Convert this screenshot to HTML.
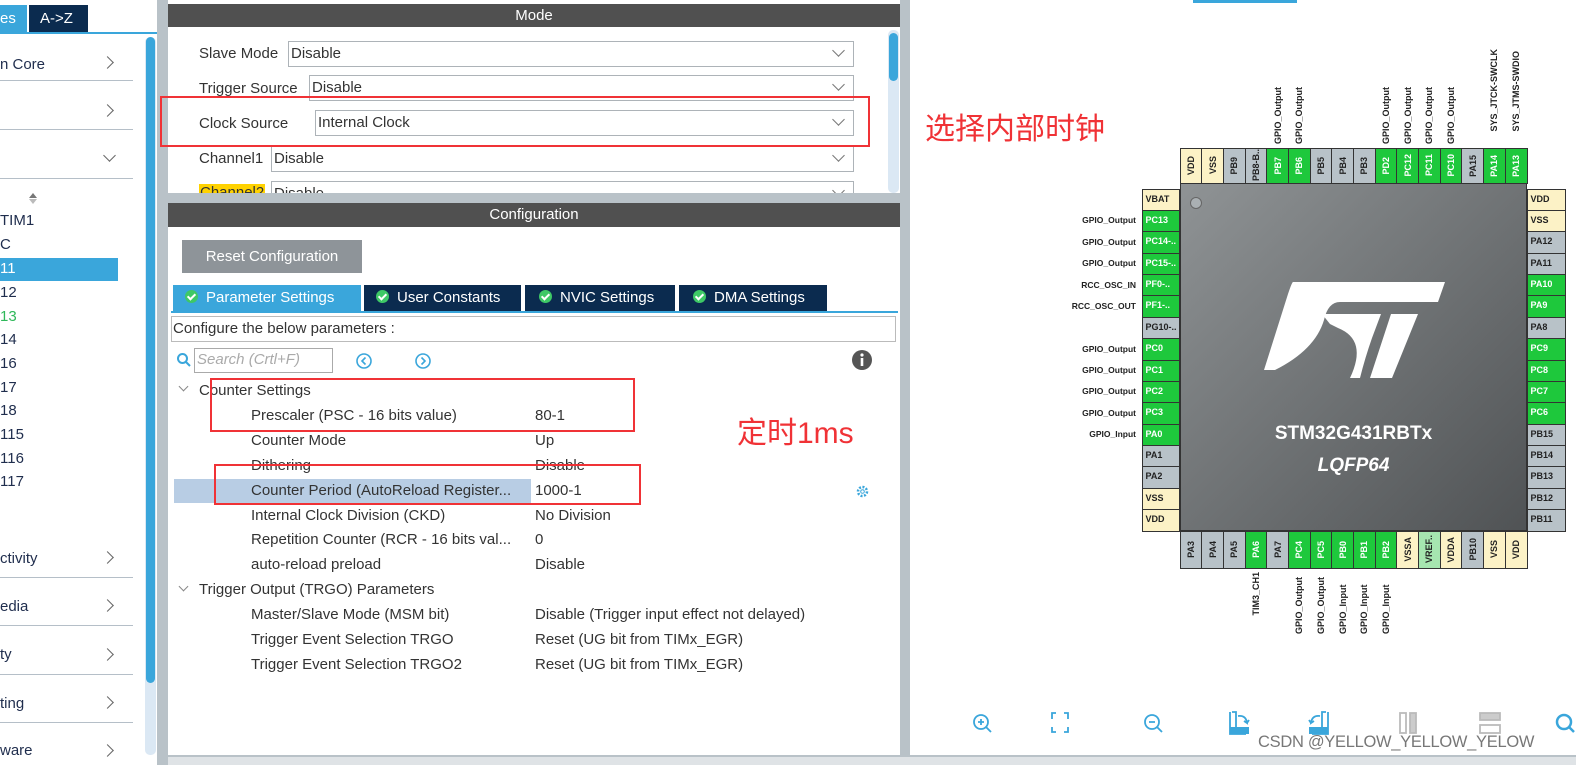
<!DOCTYPE html>
<html><head><meta charset="utf-8">
<style>
*{margin:0;padding:0;box-sizing:border-box}
body{width:1576px;height:765px;overflow:hidden;background:#fff;font-family:"Liberation Sans","Noto Sans CJK SC",sans-serif;position:relative;color:#333}
.a{position:absolute}
.t{position:absolute;font-size:15px;white-space:nowrap;color:#333}
.sb{font-size:15px;color:#1f2d4d;position:absolute;white-space:nowrap}
.chev{position:absolute;width:9px;height:9px;border-right:1.5px solid #666;border-top:1.5px solid #666;transform:rotate(45deg)}
.chd{position:absolute;width:9px;height:9px;border-right:1.5px solid #666;border-bottom:1.5px solid #666;transform:rotate(45deg)}
.line{position:absolute;left:0;width:133px;height:1px;background:#b5bfc8}
.sel{position:absolute;border:1px solid #adb3b8;background:#fff;height:26px}
.sel span{position:absolute;left:2px;top:3px;font-size:15px;color:#333}
.sel i{position:absolute;right:10px;top:4px;width:9px;height:9px;border-right:1.5px solid #777;border-bottom:1.5px solid #777;transform:rotate(45deg)}
.tab{position:absolute;top:285px;height:26px;background:#0b2b4f;color:#fff;font-size:15px;line-height:26px;padding-left:12px}
.tab b{display:inline-block;width:13px;height:13px;border-radius:50%;background:#3ec866;margin-right:8px;vertical-align:-1px;position:relative}
.tab b:after{content:"";position:absolute;left:4px;top:2px;width:3px;height:6px;border-right:2px solid #fff;border-bottom:2px solid #fff;transform:rotate(45deg)}
.red{position:absolute;border:2px solid #f03236}
.row{flex:1;border:1px solid #333;margin:-0.5px;font-size:9px;font-weight:bold;color:#222;overflow:hidden;white-space:nowrap}
.g{background:#1ec83c;color:#fff}.y{background:#fcf2c6}.s{background:#b8c2c8}.lg{background:#a6e6b0}
.col{position:absolute;display:flex;flex-direction:column}
.rw{position:absolute;display:flex;flex-direction:row}
.col .row{padding:4px 0 0 3px}
.rw .row{display:flex;align-items:center;justify-content:center}
.rw .row span,.vl span{writing-mode:vertical-rl;transform:rotate(180deg)}
.vl{flex:1;display:flex;justify-content:center;font-size:9px;font-weight:bold;color:#222;white-space:nowrap}
.ll{flex:1;text-align:right;font-size:8.5px;font-weight:bold;color:#222;padding-top:5px;white-space:nowrap}
</style></head><body>

<!-- left sidebar -->
<div class="a" style="left:0;top:5px;width:27px;height:27px;background:#3aa6db;color:#fff;font-size:15px;line-height:27px">es</div>
<div class="a" style="left:29px;top:5px;width:59px;height:27px;background:#0b2b4f;color:#fff;font-size:15px;line-height:27px;padding-left:11px">A-&gt;Z</div>
<div class="a" style="left:0;top:32px;width:157px;height:2px;background:#3aa6db"></div>
<div class="a" style="left:145px;top:37px;width:11px;height:718px;background:#dbe8f4;border-radius:5px"></div>
<div class="a" style="left:146px;top:37px;width:9px;height:646px;background:#3aa6db;border-radius:5px"></div>
<div class="a" style="left:157px;top:0;width:11px;height:765px;background:#b9c2c8"></div>
<div class="sb" style="left:0;top:56px">n Core</div><div class="chev" style="left:103px;top:58px"></div><div class="line" style="top:80px"></div>
<div class="chev" style="left:103px;top:106px"></div><div class="line" style="top:129px"></div>
<div class="chd" style="left:105px;top:151px"></div><div class="line" style="top:178px"></div>
<div class="a" style="left:29px;top:193px;border:4px solid transparent;border-bottom:5px solid #777;border-top:0"></div>
<div class="a" style="left:29px;top:199px;border:4px solid transparent;border-top:5px solid #bbb;border-bottom:0"></div>
<div class="sb" style="left:0;top:212px">TIM1</div>
<div class="sb" style="left:0;top:236px">C</div>
<div class="a" style="left:0;top:258px;width:118px;height:23px;background:#3aa6db"></div>
<div class="sb" style="left:0;top:260px;color:#fff">11</div>
<div class="sb" style="left:0;top:284px">12</div>
<div class="sb" style="left:0;top:308px;color:#2fb85a">13</div>
<div class="sb" style="left:0;top:331px">14</div>
<div class="sb" style="left:0;top:355px">16</div>
<div class="sb" style="left:0;top:379px">17</div>
<div class="sb" style="left:0;top:402px">18</div>
<div class="sb" style="left:0;top:426px">115</div>
<div class="sb" style="left:0;top:450px">116</div>
<div class="sb" style="left:0;top:473px">117</div>
<div class="sb" style="left:0;top:550px">ctivity</div><div class="chev" style="left:103px;top:553px"></div><div class="line" style="top:577px"></div>
<div class="sb" style="left:0;top:598px">edia</div><div class="chev" style="left:103px;top:601px"></div><div class="line" style="top:625px"></div>
<div class="sb" style="left:0;top:646px">ty</div><div class="chev" style="left:103px;top:650px"></div><div class="line" style="top:674px"></div>
<div class="sb" style="left:0;top:695px">ting</div><div class="chev" style="left:103px;top:698px"></div><div class="line" style="top:722px"></div>
<div class="sb" style="left:0;top:742px">ware</div><div class="chev" style="left:103px;top:746px"></div>

<!-- middle panel -->
<div class="a" style="left:168px;top:4px;width:732px;height:23px;background:#505050;color:#fff;font-size:15px;text-align:center;line-height:23px">Mode</div>
<div class="t" style="left:199px;top:45px">Slave Mode</div>
<div class="sel" style="left:288px;top:41px;width:566px"><span>Disable</span><i></i></div>
<div class="t" style="left:199px;top:80px">Trigger Source</div>
<div class="sel" style="left:309px;top:75px;width:545px"><span>Disable</span><i></i></div>
<div class="t" style="left:199px;top:115px">Clock Source</div>
<div class="sel" style="left:315px;top:110px;width:539px"><span>Internal Clock</span><i></i></div>
<div class="t" style="left:199px;top:150px">Channel1</div>
<div class="sel" style="left:271px;top:146px;width:583px"><span>Disable</span><i></i></div>
<div class="a" style="left:168px;top:180px;width:720px;height:13px;overflow:hidden">
 <div class="t" style="left:31px;top:4px;background:#ffd200;padding:0 1px">Channel2</div>
 <div class="sel" style="left:103px;top:1px;width:583px"><span>Disable</span><i></i></div>
</div>
<div class="red" style="left:160px;top:96px;width:710px;height:51px"></div>
<div class="a" style="left:888px;top:30px;width:11px;height:163px;background:#dbe8f4;border-radius:5px"></div>
<div class="a" style="left:889px;top:33px;width:9px;height:48px;background:#3aa6db;border-radius:5px"></div>
<div class="a" style="left:168px;top:193px;width:732px;height:10px;background:#b9c2c8"></div>
<div class="a" style="left:168px;top:203px;width:732px;height:24px;background:#505050;color:#fff;font-size:15px;text-align:center;line-height:24px">Configuration</div>
<div class="a" style="left:182px;top:240px;width:180px;height:33px;background:#8e9499;color:#fff;font-size:15px;text-align:center;line-height:33px">Reset Configuration</div>
<div class="tab" style="left:173px;width:188px;background:#3aa6db"><b></b>Parameter Settings</div>
<div class="tab" style="left:364px;width:157px"><b></b>User Constants</div>
<div class="tab" style="left:525px;width:150px;padding-left:14px"><b></b>NVIC Settings</div>
<div class="tab" style="left:679px;width:148px;padding-left:14px"><b></b>DMA Settings</div>
<div class="a" style="left:171px;top:311px;width:727px;height:2px;background:#3aa6db"></div>
<div class="a" style="left:171px;top:316px;width:725px;height:26px;border:1px solid #bbb;font-size:15px;padding:3px 0 0 1px">Configure the below parameters :</div>
<svg class="a" style="left:176px;top:352px" width="16" height="16"><circle cx="6.5" cy="6.5" r="4.5" fill="none" stroke="#3aa6db" stroke-width="2"/><path d="M10 10l4 4" stroke="#3aa6db" stroke-width="2"/></svg>
<div class="a" style="left:194px;top:348px;width:139px;height:25px;border:1px solid #aaa;font-size:15px;font-style:italic;color:#aaa;padding:2px 0 0 2px">Search (Crtl+F)</div>
<svg class="a" style="left:355px;top:352px" width="18" height="18"><circle cx="9" cy="9" r="7" fill="none" stroke="#3aa6db" stroke-width="1.6"/><path d="M10.5 5.5L7 9l3.5 3.5" fill="none" stroke="#3aa6db" stroke-width="1.6"/></svg>
<svg class="a" style="left:414px;top:352px" width="18" height="18"><circle cx="9" cy="9" r="7" fill="none" stroke="#3aa6db" stroke-width="1.6"/><path d="M7.5 5.5L11 9l-3.5 3.5" fill="none" stroke="#3aa6db" stroke-width="1.6"/></svg>
<svg class="a" style="left:852px;top:350px" width="20" height="20"><circle cx="10" cy="10" r="10" fill="#555"/><rect x="8.7" y="8" width="2.6" height="8" fill="#fff"/><circle cx="10" cy="5" r="1.6" fill="#fff"/></svg>
<div class="a" style="left:174px;top:479px;width:357px;height:24px;background:#b8cde4"></div>
<div class="chd" style="left:180px;top:383px;width:7px;height:7px;border-color:#888"></div>
<div class="t" style="left:199px;top:382px">Counter Settings</div>
<div class="t" style="left:251px;top:407px">Prescaler (PSC - 16 bits value)</div><div class="t" style="left:535px;top:407px">80-1</div>
<div class="t" style="left:251px;top:432px">Counter Mode</div><div class="t" style="left:535px;top:432px">Up</div>
<div class="t" style="left:251px;top:457px">Dithering</div><div class="t" style="left:535px;top:457px">Disable</div>
<div class="t" style="left:251px;top:482px">Counter Period (AutoReload Register...</div><div class="t" style="left:535px;top:482px">1000-1</div>
<div class="t" style="left:251px;top:507px">Internal Clock Division (CKD)</div><div class="t" style="left:535px;top:507px">No Division</div>
<div class="t" style="left:251px;top:531px">Repetition Counter (RCR - 16 bits val...</div><div class="t" style="left:535px;top:531px">0</div>
<div class="t" style="left:251px;top:556px">auto-reload preload</div><div class="t" style="left:535px;top:556px">Disable</div>
<div class="chd" style="left:180px;top:583px;width:7px;height:7px;border-color:#888"></div>
<div class="t" style="left:199px;top:581px">Trigger Output (TRGO) Parameters</div>
<div class="t" style="left:251px;top:606px">Master/Slave Mode (MSM bit)</div><div class="t" style="left:535px;top:606px">Disable (Trigger input effect not delayed)</div>
<div class="t" style="left:251px;top:631px">Trigger Event Selection TRGO</div><div class="t" style="left:535px;top:631px">Reset (UG bit from TIMx_EGR)</div>
<div class="t" style="left:251px;top:656px">Trigger Event Selection TRGO2</div><div class="t" style="left:535px;top:656px">Reset (UG bit from TIMx_EGR)</div>
<svg class="a" style="left:855px;top:484px" width="15" height="15"><circle cx="7.5" cy="7.5" r="4.5" fill="none" stroke="#3aa6db" stroke-width="2.5" stroke-dasharray="2 1.5"/><circle cx="7.5" cy="7.5" r="1.8" fill="none" stroke="#3aa6db"/></svg>
<div class="red" style="left:210px;top:378px;width:425px;height:54px"></div>
<div class="red" style="left:214px;top:464px;width:427px;height:41px"></div>
<div class="a" style="left:737px;top:408px;font-size:30px;color:#f03236;white-space:nowrap">定时1ms</div>
<div class="a" style="left:900px;top:0;width:10px;height:765px;background:#b9c2c8"></div>
<div class="a" style="left:168px;top:755px;width:1408px;height:10px;background:#dfe3e6"></div>
<div class="a" style="left:168px;top:755px;width:1408px;height:2px;background:#b9c2c8"></div>

<!-- right -->
<div class="a" style="left:1193px;top:0;width:104px;height:3px;background:#3aa6db"></div>
<div class="a" style="left:925px;top:104px;font-size:30px;color:#f03236;white-space:nowrap">选择内部时钟</div>

<div class="a" style="left:1180px;top:183px;width:347px;height:348px;background:linear-gradient(135deg,#8f9395,#505355);border:1px solid #333"></div>
<div class="a" style="left:1190px;top:197px;width:12px;height:12px;border-radius:50%;background:#aab0b3;border:1px solid #666"></div>
<svg class="a" style="left:1260px;top:280px" width="200" height="110" viewBox="0 0 200 110"><path d="M33 2H185L178 22H80Q68 22 64 40Q55 70 15 90H4L28 14Q32 2 33 2Z" fill="#fff"/><path d="M62 34H121L112 58Q105 78 100 98L90 98Q108 60 78 48L70 44Z" fill="#fff"/><path d="M131 34H158L132 98H110Z" fill="#fff"/></svg>
<div class="a" style="left:1180px;top:423px;width:347px;text-align:center;font-size:19px;font-weight:bold;color:#fff">STM32G431RBTx</div>
<div class="a" style="left:1180px;top:455px;width:347px;text-align:center;font-size:19px;font-weight:bold;font-style:italic;color:#fff">LQFP64</div>

<div class="rw" style="left:1180px;top:148px;width:347px;height:35px">
<div class="row y"><span>VDD</span></div><div class="row y"><span>VSS</span></div><div class="row s"><span>PB9</span></div><div class="row s"><span>PB8-B..</span></div><div class="row g"><span>PB7</span></div><div class="row g"><span>PB6</span></div><div class="row s"><span>PB5</span></div><div class="row s"><span>PB4</span></div><div class="row s"><span>PB3</span></div><div class="row g"><span>PD2</span></div><div class="row g"><span>PC12</span></div><div class="row g"><span>PC11</span></div><div class="row g"><span>PC10</span></div><div class="row s"><span>PA15</span></div><div class="row g"><span>PA14</span></div><div class="row g"><span>PA13</span></div>
</div>
<div class="rw" style="left:1180px;top:40px;width:347px;height:104px">
<div class="vl"></div><div class="vl"></div><div class="vl"></div><div class="vl"></div><div class="vl" style="align-items:flex-end"><span>GPIO_Output</span></div><div class="vl" style="align-items:flex-end"><span>GPIO_Output</span></div><div class="vl"></div><div class="vl"></div><div class="vl"></div><div class="vl" style="align-items:flex-end"><span>GPIO_Output</span></div><div class="vl" style="align-items:flex-end"><span>GPIO_Output</span></div><div class="vl" style="align-items:flex-end"><span>GPIO_Output</span></div><div class="vl" style="align-items:flex-end"><span>GPIO_Output</span></div><div class="vl"></div><div class="vl" style="align-items:flex-end;padding-bottom:12px"><span>SYS_JTCK-SWCLK</span></div><div class="vl" style="align-items:flex-end;padding-bottom:12px"><span>SYS_JTMS-SWDIO</span></div>
</div>

<div class="col" style="left:1142px;top:189px;width:37px;height:342px">
<div class="row y">VBAT</div><div class="row g">PC13</div><div class="row g">PC14-..</div><div class="row g">PC15-..</div><div class="row g">PF0-..</div><div class="row g">PF1-..</div><div class="row s">PG10-..</div><div class="row g">PC0</div><div class="row g">PC1</div><div class="row g">PC2</div><div class="row g">PC3</div><div class="row g">PA0</div><div class="row s">PA1</div><div class="row s">PA2</div><div class="row y">VSS</div><div class="row y">VDD</div>
</div>
<div class="col" style="left:1040px;top:189px;width:96px;height:342px">
<div class="ll"></div><div class="ll">GPIO_Output</div><div class="ll">GPIO_Output</div><div class="ll">GPIO_Output</div><div class="ll">RCC_OSC_IN</div><div class="ll">RCC_OSC_OUT</div><div class="ll"></div><div class="ll">GPIO_Output</div><div class="ll">GPIO_Output</div><div class="ll">GPIO_Output</div><div class="ll">GPIO_Output</div><div class="ll">GPIO_Input</div><div class="ll"></div><div class="ll"></div><div class="ll"></div><div class="ll"></div>
</div>
<div class="col" style="left:1527px;top:189px;width:38px;height:342px">
<div class="row y">VDD</div><div class="row y">VSS</div><div class="row s">PA12</div><div class="row s">PA11</div><div class="row g">PA10</div><div class="row g">PA9</div><div class="row s">PA8</div><div class="row g">PC9</div><div class="row g">PC8</div><div class="row g">PC7</div><div class="row g">PC6</div><div class="row s">PB15</div><div class="row s">PB14</div><div class="row s">PB13</div><div class="row s">PB12</div><div class="row s">PB11</div>
</div>
<div class="rw" style="left:1180px;top:531px;width:347px;height:37px">
<div class="row s"><span>PA3</span></div><div class="row s"><span>PA4</span></div><div class="row s"><span>PA5</span></div><div class="row g"><span>PA6</span></div><div class="row s"><span>PA7</span></div><div class="row g"><span>PC4</span></div><div class="row g"><span>PC5</span></div><div class="row g"><span>PB0</span></div><div class="row g"><span>PB1</span></div><div class="row g"><span>PB2</span></div><div class="row y"><span>VSSA</span></div><div class="row lg"><span>VREF..</span></div><div class="row y"><span>VDDA</span></div><div class="row s"><span>PB10</span></div><div class="row y"><span>VSS</span></div><div class="row y"><span>VDD</span></div>
</div>
<div class="rw" style="left:1180px;top:572px;width:347px;height:62px">
<div class="vl"></div><div class="vl"></div><div class="vl"></div><div class="vl" style="align-items:flex-start"><span>TIM3_CH1</span></div><div class="vl"></div><div class="vl"><span>GPIO_Output</span></div><div class="vl"><span>GPIO_Output</span></div><div class="vl"><span>GPIO_Input</span></div><div class="vl"><span>GPIO_Input</span></div><div class="vl"><span>GPIO_Input</span></div><div class="vl"></div><div class="vl"></div><div class="vl"></div><div class="vl"></div><div class="vl"></div><div class="vl"></div>
</div>

<!-- toolbar -->
<svg class="a" style="left:968px;top:710px" width="608" height="30" stroke="#3aa6db" fill="none" stroke-width="1.8">
<circle cx="13" cy="12" r="7"/><path d="M18 17l5 5M13 9v6M10 12h6"/>
<path d="M88 3h-4v6M96 3h4v6M84 17v5h4M100 17v5h-4"/>
<circle cx="184" cy="12" r="7"/><path d="M189 17l5 5M181 12h6"/>
<path d="M262 2v22h16M264 2h4v16" /><rect x="262" y="17" width="19" height="7" fill="#3aa6db" stroke="none"/><path d="M270 6q8 -1 9 7l-3 -2M279 13l2 -3"/>
<path d="M360 2v22h-16M358 2h-4v16"/><rect x="341" y="17" width="19" height="7" fill="#3aa6db" stroke="none"/><path d="M352 6q-8 -1 -9 7l3 -2M343 13l-2 -3"/>
<g stroke="#bbb"><rect x="432" y="3" width="6" height="20"/><rect x="442" y="3" width="6" height="20" fill="#ccc"/><rect x="512" y="3" width="20" height="7" fill="#ccc"/><rect x="512" y="15" width="20" height="8"/></g>
<circle cx="596" cy="12" r="7" stroke-width="2.5"/><path d="M601 17l5 5" stroke-width="2.5"/>
</svg>
<div class="a" style="left:1258px;top:732px;font-size:17px;color:#777;letter-spacing:-0.3px;white-space:nowrap;transform:scaleX(0.97);transform-origin:left">CSDN @YELLOW_YELLOW_YELOW</div>
</body></html>
